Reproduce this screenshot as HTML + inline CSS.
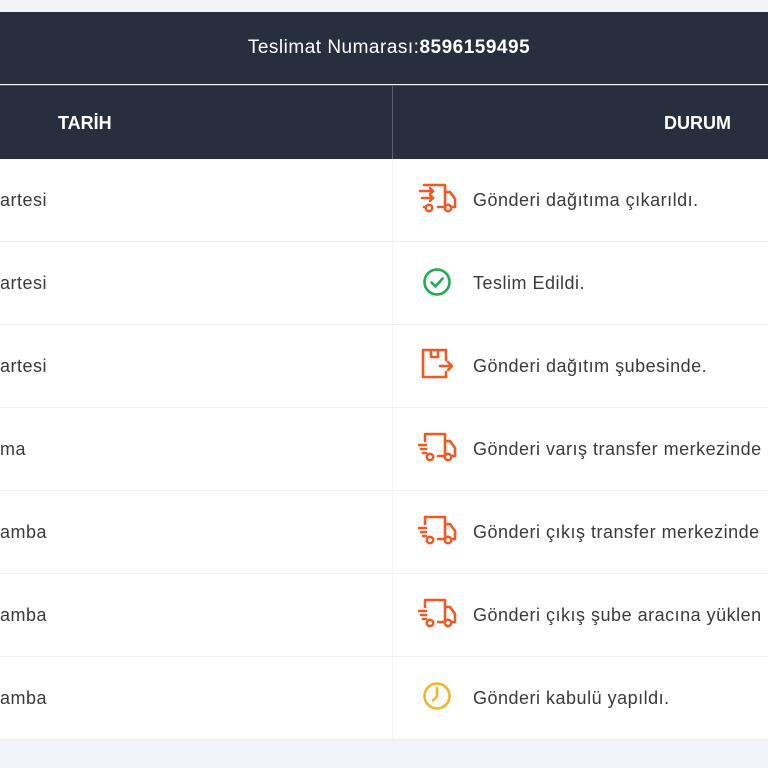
<!DOCTYPE html>
<html><head><style>
body{margin:0;width:768px;height:768px;overflow:hidden;background:#f1f5f9;font-family:"Liberation Sans",sans-serif;position:relative}
.h1{position:absolute;top:12px;left:0;width:768px;height:72px;background:#272f3f;color:#fff;text-align:center;line-height:72px;font-size:19px;letter-spacing:0.5px;text-indent:10px}
.h2{position:absolute;top:85px;left:0;width:768px;height:74px;background:#272f3f;border-top:1px solid #4a5262;color:#fff;font-weight:bold;font-size:18px}
.h2 .d{position:absolute;left:392px;top:0;width:1px;height:74px;background:#5a6272}
.row{position:absolute;left:0;width:768px;height:82px;background:#fff;border-bottom:1px solid #eef0f3;font-size:18px;letter-spacing:0.5px;color:#3a3a3a}
.row .l{position:absolute;left:0;top:0;line-height:82px;width:392px;border-right:1px solid #f2f3f5;height:82px}
.row svg{position:absolute;left:418px;top:23px}
.row .t{position:absolute;left:473px;line-height:82px;white-space:nowrap}
</style></head><body>
<div class="h1">Teslimat Numarası:<b>8596159495</b></div>
<div class="h2"><span style="position:absolute;left:58px;top:27px">TARİH</span><span style="position:absolute;left:664px;top:27px">DURUM</span><div class="d"></div></div>

<div class="row" style="top:159px"><div class="l">artesi</div>
<svg width="40" height="36" viewBox="0 0 40 36" fill="none" stroke="#ef5a24" stroke-width="2.6" stroke-linecap="round" stroke-linejoin="round"><path d="M6 3h21v22h-7M27 10h5l5 7v8h-3M2 9h13l-3-3M15 9l-3 3M4 16h11M15 16l-3-3M15 16l-3 3M6 25h1"/><circle cx="11" cy="26" r="3.2"/><circle cx="30" cy="26" r="3.2"/></svg>
<div class="t">Gönderi dağıtıma çıkarıldı.</div></div>

<div class="row" style="top:242px"><div class="l">artesi</div>
<svg width="40" height="36" viewBox="0 0 40 36" fill="none" stroke="#1aaf50" stroke-width="2.6" stroke-linecap="round" stroke-linejoin="round"><circle cx="19" cy="17" r="12.5"/><path d="M13.5 17.5l4 4 7-8"/></svg>
<div class="t">Teslim Edildi.</div></div>

<div class="row" style="top:325px"><div class="l">artesi</div>
<svg width="40" height="36" viewBox="0 0 40 36" fill="none" stroke="#ef5a24" stroke-width="2.6" stroke-linecap="round" stroke-linejoin="round"><path d="M28 12V2H5v27h23v-5M13 2v7h7V2M22 18h12M30 14l4 4-4 4"/></svg>
<div class="t">Gönderi dağıtım şubesinde.</div></div>

<div class="row" style="top:408px"><div class="l">ma</div>
<svg width="40" height="36" viewBox="0 0 40 36" fill="none" stroke="#ef5a24" stroke-width="2.6" stroke-linecap="round" stroke-linejoin="round"><path d="M7 10V3h20v22h-7M27 10h5l5 7v8h-3M1 14h7M3 18h5M5 22h3"/><circle cx="12" cy="26" r="3.2"/><circle cx="30" cy="26" r="3.2"/></svg>
<div class="t">Gönderi varış transfer merkezinde</div></div>

<div class="row" style="top:491px"><div class="l">amba</div>
<svg width="40" height="36" viewBox="0 0 40 36" fill="none" stroke="#ef5a24" stroke-width="2.6" stroke-linecap="round" stroke-linejoin="round"><path d="M7 10V3h20v22h-7M27 10h5l5 7v8h-3M1 14h7M3 18h5M5 22h3"/><circle cx="12" cy="26" r="3.2"/><circle cx="30" cy="26" r="3.2"/></svg>
<div class="t">Gönderi çıkış transfer merkezinde</div></div>

<div class="row" style="top:574px"><div class="l">amba</div>
<svg width="40" height="36" viewBox="0 0 40 36" fill="none" stroke="#ef5a24" stroke-width="2.6" stroke-linecap="round" stroke-linejoin="round"><path d="M7 10V3h20v22h-7M27 10h5l5 7v8h-3M1 14h7M3 18h5M5 22h3"/><circle cx="12" cy="26" r="3.2"/><circle cx="30" cy="26" r="3.2"/></svg>
<div class="t">Gönderi çıkış şube aracına yüklen</div></div>

<div class="row" style="top:657px"><div class="l">amba</div>
<svg width="40" height="36" viewBox="0 0 40 36" fill="none" stroke="#f2b62c" stroke-width="2.6" stroke-linecap="round" stroke-linejoin="round"><circle cx="19" cy="16" r="12.5"/><path d="M19 8v8.5l-4 4"/></svg>
<div class="t">Gönderi kabulü yapıldı.</div></div>
</body></html>
